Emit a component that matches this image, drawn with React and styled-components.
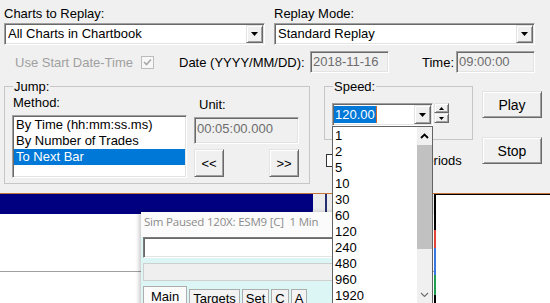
import React from "react";
import styled, { createGlobalStyle } from "styled-components";

const GlobalStyle = createGlobalStyle`
  html, body {
    margin: 0;
    padding: 0;
    background: #f0f0f0;
  }
  body {
    font-family: "Liberation Sans", Arial, sans-serif;
    font-size: 13px;
    color: #000;
  }
  * {
    box-sizing: border-box;
  }
`;

const sunken = `
  border: 1px solid;
  border-color: #a0a0a0 #ffffff #ffffff #a0a0a0;
  box-shadow: inset 1px 1px 0 #696969, inset -1px -1px 0 #e3e3e3;
`;

const raised = `
  border: 1px solid;
  border-color: #e3e3e3 #696969 #696969 #e3e3e3;
  box-shadow: inset 1px 1px 0 #ffffff, inset -1px -1px 0 #a0a0a0;
  background: #f0f0f0;
`;

const Screen = styled.div`
  position: relative;
  width: 550px;
  height: 303px;
  overflow: hidden;
  display: flex;
  flex-direction: column;
`;

const Dialog = styled.div`
  height: 193px;
  flex: none;
  background: #f0f0f0;
  padding: 6px 0 0 4px;
  display: flex;
  flex-direction: column;
`;

const TopRow = styled.div`
  display: flex;
  gap: 9px;
`;

const Field = styled.div`
  width: 261px;
  display: flex;
  flex-direction: column;
  gap: 2px;
`;

const Label = styled.span`
  line-height: 15px;
  white-space: nowrap;
  flex: none;
  width: ${({ $w }) => ($w ? `${$w}px` : "auto")};
  margin-left: ${({ $ml }) => $ml || 0}px;
  margin-top: ${({ $mt }) => $mt || 0}px;
  padding-left: ${({ $pl }) => $pl || 0}px;
  color: ${({ $disabled }) => ($disabled ? "#a0a0a0" : "#000")};
`;

const Combo = styled.div`
  height: ${({ $h }) => $h || 22}px;
  width: ${({ $w }) => ($w ? `${$w}px` : "auto")};
  ${sunken}
  background: #fff;
  display: flex;
  align-items: stretch;
  padding: 1px 1px 1px ${({ $pl }) => $pl ?? 3}px;
`;

const ComboText = styled.span`
  flex: 1;
  line-height: 18px;
  white-space: nowrap;
  overflow: hidden;
`;

const Selected = styled.span`
  align-self: center;
  height: 17px;
  line-height: 17px;
  padding: 0 1px;
  background: #0078d7;
  color: #fff;
  border-right: 1px solid #d0662a;
`;

const DropButton = styled.div`
  width: 17px;
  margin-left: auto;
  ${raised}
  display: flex;
  align-items: center;
  justify-content: center;
`;

const MidRow = styled.div`
  display: flex;
  align-items: center;
  height: 22px;
  margin-top: 6px;
`;

const CheckBox = styled.div`
  width: 13px;
  height: 13px;
  flex: none;
  margin-left: ${({ $ml }) => $ml || 0}px;
  border: 1px solid ${({ $disabled }) => ($disabled ? "#bcbcbc" : "#333")};
  background: ${({ $disabled }) => ($disabled ? "#f7f7f7" : "#fff")};
  display: flex;
  align-items: center;
  justify-content: center;
`;

const ReadOnlyBox = styled.div`
  width: ${({ $w }) => $w}px;
  height: ${({ $h }) => $h || 22}px;
  flex: none;
  ${sunken}
  background: #f0f0f0;
  color: #6d6d6d;
  padding: ${({ $pt }) => $pt || 0}px 2px 0;
  margin-top: ${({ $mt }) => $mt || 0}px;
  line-height: ${({ $lh }) => $lh || 20}px;
  white-space: nowrap;
`;

const LowerRow = styled.div`
  display: flex;
  align-items: flex-start;
  margin-top: 6px;
`;

const Group = styled.fieldset`
  margin: 0;
  min-width: 0;
  width: ${({ $w }) => $w}px;
  height: ${({ $h }) => $h}px;
  border: 1px solid #c6c6c6;
  padding: 0 7px;
`;

const Legend = styled.legend`
  margin-left: 1px;
  padding: 0 1px;
  line-height: 15px;
`;

const JumpBody = styled.div`
  display: flex;
  gap: 7px;
`;

const Column = styled.div`
  width: ${({ $w }) => $w}px;
  display: flex;
  flex-direction: column;
  margin-left: ${({ $ml }) => $ml || 0}px;
`;

const ListBox = styled.div`
  margin-top: 5px;
  height: 63px;
  ${sunken}
  background: #fff;
  padding: 1px;
`;

const ListItem = styled.div`
  height: 16px;
  line-height: 16px;
  padding-left: 2px;
  white-space: nowrap;
  background: ${({ $active }) => ($active ? "#0078d7" : "transparent")};
  color: ${({ $active }) => ($active ? "#fff" : "#000")};
`;

const ButtonPair = styled.div`
  display: flex;
  justify-content: space-between;
  margin-top: 5px;
`;

const Button = styled.div`
  width: ${({ $w }) => $w}px;
  height: ${({ $h }) => $h}px;
  margin-top: ${({ $mt }) => $mt || 0}px;
  ${raised}
  display: flex;
  align-items: center;
  justify-content: center;
  font-size: ${({ $fs }) => $fs || 13}px;
`;

const SpeedRow = styled.div`
  display: flex;
  margin-top: 9px;
`;

const Spin = styled.div`
  width: 15px;
  height: 20px;
  margin-left: 1px;
  display: flex;
  flex-direction: column;
`;

const SpinHalf = styled.div`
  flex: 1;
  ${raised}
  display: flex;
  align-items: center;
  justify-content: center;
`;

const CheckRow = styled.div`
  display: flex;
  align-items: center;
  gap: 5px;
  margin: 14px 0 0 2px;
  height: 13px;
`;

const Desktop = styled.div`
  flex: 1;
  display: flex;
  border-top: 1px solid #c8743a;
  background: #fff;
`;

const LeftPane = styled.div`
  width: 434px;
  display: flex;
  flex-direction: column;
`;

const Strip = styled.div`
  height: 20px;
  display: flex;
  background: #ececec;
`;

const NavyBar = styled.div`
  width: 313px;
  background: #000080;
  border-bottom-right-radius: 4px;
`;

const StripLine = styled.div`
  width: 2px;
  margin-left: 12px;
  background: #26306e;
`;

const WhitePane = styled.div`
  height: 58px;
  background: #fff;
  border-bottom: 1px solid #a0a0a0;
`;

const ChartPane = styled.div`
  flex: 1;
  display: flex;
`;

const Edge = styled.div`
  width: 2px;
  display: flex;
  flex-direction: column;
`;

const EdgeMark = styled.div`
  height: ${({ $h }) => ($h ? `${$h}px` : "auto")};
  flex: ${({ $h }) => ($h ? "none" : 1)};
  background: ${({ $c }) => $c};
`;

const ChartBody = styled.div`
  flex: 1;
  border-top: 1px solid #000;
  background: #fff;
`;

const FloatWin = styled.div`
  position: absolute;
  left: 141px;
  top: 212px;
  width: 291px;
  height: 100px;
  z-index: 1;
  background: #dcf5f5;
  box-shadow: -2px 0 4px rgba(0, 0, 0, 0.22);
  display: flex;
  flex-direction: column;
  padding-left: 2px;
`;

const WinTitle = styled.div`
  height: 25px;
  margin-left: -2px;
  padding-left: 3px;
  background: #fbfbfb;
  color: #8c8c8c;
  font-family: "Open Sans", "Noto Sans", sans-serif;
  font-size: 11.5px;
  letter-spacing: -0.2px;
  line-height: 20px;
  white-space: nowrap;
`;

const WinInput = styled.div`
  height: 21px;
  ${sunken}
  border-color: #7a7a7a #ffffff #ffffff #7a7a7a;
  background: #fff;
`;

const WinStatus = styled.div`
  height: 18px;
  margin-top: 5px;
  border: 1px solid #cfcfcf;
  background: #efefef;
`;

const Tabs = styled.div`
  display: flex;
  gap: 2px;
  margin-top: 5px;
  align-items: flex-start;
`;

const Tab = styled.div`
  padding: ${({ $active }) => ($active ? "2px 7px 0" : "1px 3px 0")};
  margin-top: ${({ $active }) => ($active ? 0 : 3)}px;
  height: 20px;
  line-height: 15px;
  border: 1px solid #adadad;
  border-bottom: none;
  background: ${({ $active }) => ($active ? "#fbfbfb" : "#f3f3f3")};
  white-space: nowrap;
`;

const DropList = styled.div`
  position: absolute;
  left: 332px;
  top: 126px;
  width: 101px;
  height: 178px;
  z-index: 2;
  background: #fff;
  border: 1px solid #646464;
  display: flex;
`;

const Options = styled.div`
  flex: 1;
  padding-top: 1px;
`;

const Option = styled.div`
  height: 16px;
  line-height: 16px;
  padding-left: 2px;
`;

const ScrollBar = styled.div`
  width: 15px;
  display: flex;
  flex-direction: column;
  background: #f0f0f0;
`;

const ScrollArrow = styled.div`
  height: ${({ $h }) => $h}px;
  display: flex;
  align-items: center;
  justify-content: center;
`;

const Thumb = styled.div`
  height: 104px;
  background: #c1c1c1;
`;

const Track = styled.div`
  flex: 1;
`;

const DownArrow = () => (
  <svg width="7" height="4" viewBox="0 0 7 4">
    <path d="M0 0H7L3.5 4Z" fill="#000" />
  </svg>
);

const SmallArrow = ({ up }) => (
  <svg width="5" height="3" viewBox="0 0 5 3">
    <path d={up ? "M0 3H5L2.5 0Z" : "M0 0H5L2.5 3Z"} fill="#000" />
  </svg>
);

const Check = ({ color }) => (
  <svg width="9" height="8" viewBox="0 0 9 8">
    <path d="M1 4L3.5 6.5L8 1.5" fill="none" stroke={color} strokeWidth="1.6" />
  </svg>
);

const Chevron = ({ up, color, weight }) => (
  <svg width="9" height="6" viewBox="0 0 9 6">
    <path
      d={up ? "M1 5L4.5 1.5L8 5" : "M1 1L4.5 4.5L8 1"}
      fill="none"
      stroke={color}
      strokeWidth={weight}
    />
  </svg>
);

const speeds = ["1", "2", "5", "10", "30", "60", "120", "240", "480", "960", "1920"];
const methods = ["By Time (hh:mm:ss.ms)", "By Number of Trades", "To Next Bar"];

export default function App() {
  return (
    <Screen>
      <GlobalStyle />
      <Dialog>
        <TopRow>
          <Field>
            <Label>Charts to Replay:</Label>
            <Combo>
              <ComboText>All Charts in Chartbook</ComboText>
              <DropButton>
                <DownArrow />
              </DropButton>
            </Combo>
          </Field>
          <Field>
            <Label>Replay Mode:</Label>
            <Combo>
              <ComboText>Standard Replay</ComboText>
              <DropButton>
                <DownArrow />
              </DropButton>
            </Combo>
          </Field>
        </TopRow>

        <MidRow>
          <Label $disabled $ml={11} $w={126}>
            Use Start Date-Time
          </Label>
          <CheckBox $disabled>
            <Check color="#a8a8a8" />
          </CheckBox>
          <Label $ml={25} $w={131}>
            Date (YYYY/MM/DD):
          </Label>
          <ReadOnlyBox $w={79}>2018-11-16</ReadOnlyBox>
          <Label $ml={33} $w={34}>
            Time:
          </Label>
          <ReadOnlyBox $w={79}>09:00:00</ReadOnlyBox>
        </MidRow>

        <LowerRow>
          <Group $w={306} $h={105}>
            <Legend>Jump:</Legend>
            <JumpBody>
              <Column $w={175}>
                <Label $mt={1} $pl={1}>
                  Method:
                </Label>
                <ListBox>
                  {methods.map((m, i) => (
                    <ListItem key={m} $active={i === 2}>
                      {m}
                    </ListItem>
                  ))}
                </ListBox>
              </Column>
              <Column $w={105}>
                <Label $mt={3} $pl={5}>
                  Unit:
                </Label>
                <ReadOnlyBox $w={105} $h={27} $pt={2} $lh={18} $mt={5}>
                  00:05:00.000
                </ReadOnlyBox>
                <ButtonPair>
                  <Button $w={30} $h={28}>
                    &lt;&lt;
                  </Button>
                  <Button $w={30} $h={28}>
                    &gt;&gt;
                  </Button>
                </ButtonPair>
              </Column>
            </JumpBody>
          </Group>

          <Column $w={149} $ml={14}>
            <Group $w={149} $h={61}>
              <Legend>Speed:</Legend>
              <SpeedRow>
                <Combo $w={101} $h={23} $pl={1}>
                  <Selected>120.00</Selected>
                  <DropButton>
                    <DownArrow />
                  </DropButton>
                </Combo>
                <Spin>
                  <SpinHalf>
                    <SmallArrow up />
                  </SpinHalf>
                  <SpinHalf>
                    <SmallArrow />
                  </SpinHalf>
                </Spin>
              </SpeedRow>
            </Group>
            <CheckRow>
              <CheckBox />
              <Label>Use Trading Periods</Label>
            </CheckRow>
          </Column>

          <Column $w={60} $ml={9}>
            <Button $w={60} $h={27} $mt={12} $fs={14}>
              Play
            </Button>
            <Button $w={60} $h={27} $mt={19} $fs={14}>
              Stop
            </Button>
          </Column>
        </LowerRow>
      </Dialog>

      <Desktop>
        <LeftPane>
          <Strip>
            <NavyBar />
            <StripLine />
          </Strip>
          <WhitePane />
        </LeftPane>
        <ChartPane>
          <Edge>
            <EdgeMark $c="#000" $h={36} />
            <EdgeMark $c="#e0453a" $h={18} />
            <EdgeMark $c="#3a78e0" $h={27} />
            <EdgeMark $c="#1fa050" $h={20} />
            <EdgeMark $c="#000" />
          </Edge>
          <ChartBody />
        </ChartPane>
      </Desktop>

      <FloatWin>
        <WinTitle>Sim Paused 120X: ESM9 [C]&nbsp; 1 Min</WinTitle>
        <WinInput />
        <WinStatus />
        <Tabs>
          <Tab $active>Main</Tab>
          <Tab>Targets</Tab>
          <Tab>Set</Tab>
          <Tab>C</Tab>
          <Tab>A</Tab>
        </Tabs>
      </FloatWin>

      <DropList>
        <Options>
          {speeds.map((s) => (
            <Option key={s}>{s}</Option>
          ))}
        </Options>
        <ScrollBar>
          <ScrollArrow $h={18}>
            <Chevron up color="#000" weight={1.8} />
          </ScrollArrow>
          <Thumb />
          <Track />
          <ScrollArrow $h={17}>
            <Chevron color="#707070" weight={1.2} />
          </ScrollArrow>
        </ScrollBar>
      </DropList>
    </Screen>
  );
}
